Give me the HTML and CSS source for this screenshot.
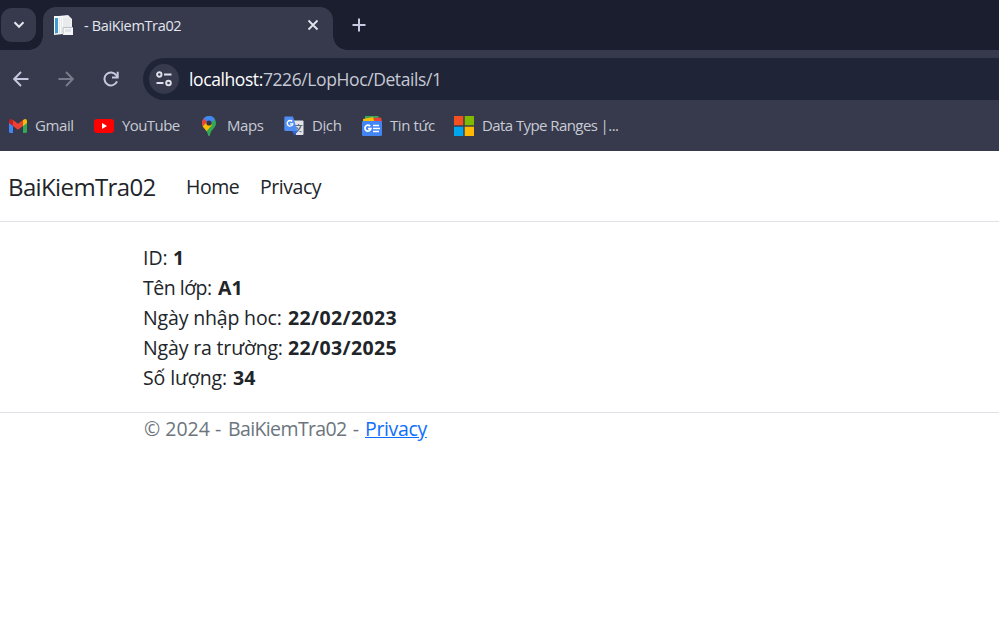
FILE: index.html
```html
<!DOCTYPE html>
<html lang="vi">
<head>
<meta charset="utf-8">
<title>- BaiKiemTra02</title>
<link rel="stylesheet" href="styles.css">
</head>
<body>
<div class="tabstrip">
  <div class="tab-search"><svg width="12" height="8" viewBox="0 0 12 8"><path d="M1.5 1.3 6 5.8 10.5 1.3" fill="none" stroke="#e3e5ef" stroke-width="2"/></svg></div>
  <div class="tab">
    <svg class="favicon" width="21" height="21" viewBox="0 0 21 21"><path d="M1 1.5 15 0l4 4v10H1z" fill="#eef0f1"/><path d="M1 1h9v18L1 20z" fill="#f8f9f9"/><path d="M2 3h3v15l-3 .5z" fill="#3f9bd0"/><path d="M6.500 2.500v16M8.500 2.500v16" stroke="#e3e7e9"/><path d="M10 3h7v9h-7z" fill="#e8eaeb"/><path d="M10 12h10v8H10z" fill="#f4f5f5"/><path d="M12 14h6v3h-6z" fill="#dfe5e8"/><path d="M10 19.500V12.500h10" fill="none" stroke="#b7c0c5"/></svg>
    <span class="tab-title">- BaiKiemTra02</span>
    <svg class="close" width="12" height="12" viewBox="0 0 12 12"><path d="m1.5 1.5 9 9m0-9-9 9" stroke="#e3e5ef" stroke-width="1.8"/></svg>
  </div>
  <svg class="plus" width="14" height="14" viewBox="0 0 14 14"><path d="M7 .5v13M.5 7h13" stroke="#c6c9df" stroke-width="2"/></svg>
</div>
<div class="toolbar">
  <div class="nav-icons">
    <svg width="16" height="16" viewBox="0 0 16 16"><path d="M15.5 8H1.5M8 1 1.2 8 8 15" fill="none" stroke="#c5c8de" stroke-width="1.9"/></svg>
    <svg width="16" height="16" viewBox="0 0 16 16"><path d="M.5 8h14M8 1l6.800 7L8 15" fill="none" stroke="#777b8b" stroke-width="1.9"/></svg>
    <svg width="16" height="16" viewBox="0 0 16 16"><path d="M14 10.400A6.500 6.500 0 1 1 13.300 4.200L14.500 5.800" fill="none" stroke="#c5c8de" stroke-width="2"/><path d="M14.700 .8v5.700H9" fill="none" stroke="#c5c8de" stroke-width="2"/></svg>
  </div>
  <div class="omnibox">
    <div class="site-info"><svg width="16" height="16" viewBox="0 0 16 16" fill="none" stroke="#dfe1ed" stroke-width="1.9"><circle cx="3.300" cy="3.500" r="2.200"/><path d="M8 3.500h7.500M.5 12h7"/><circle cx="12.500" cy="12" r="2.300"/></svg></div>
    <span class="url"><b>localhost:</b>7226/LopHoc/Details/1</span>
  </div>
</div>
<div class="bookmarks">
  <a class="bm gmail"><svg width="18" height="14" viewBox="0 0 18 14"><path d="M0 3v9.500Q0 14 1.500 14H4V6z" fill="#4285f4"/><path d="M18 3v9.500q0 1.500-1.500 1.500H14V6z" fill="#34a853"/><path d="M14 1v6l4-3V2q0-2-2-2z" fill="#fbbc04"/><path d="M4 1v6L0 4V2q0-2 2-2z" fill="#c5221f"/><path d="M4 1 9 4.800 14 1v6l-5 3.800L4 7z" fill="#ea4335"/></svg><span>Gmail</span></a>
  <a class="bm youtube"><svg width="20" height="14" viewBox="0 0 20 14"><rect width="20" height="14" rx="3" fill="#f00"/><path d="m8 4 5 3-5 3z" fill="#fff"/></svg><span>YouTube</span></a>
  <a class="bm maps"><svg width="14" height="20" viewBox="0 0 14 20"><defs><clipPath id="pin"><path d="M7 0a7 7 0 0 1 7 7c0 5-5 6-6.200 12.500Q7 20.500 6.200 19.500C5 13 0 12 0 7a7 7 0 0 1 7-7z"/></clipPath></defs><g clip-path="url(#pin)"><path d="M0 0h14v20H0z" fill="#34a853"/><path d="M0 0h14L7 7 1 13z" fill="#4285f4"/><path d="M0 1 7 7 1 13-2 8z" fill="#ea4335"/><path d="m0 11 7-7 3 5-7 8z" fill="#fbbc04"/><path d="M6 0h8l-1 3-6 6-3-4z" fill="#4285f4"/></g><circle cx="7" cy="7" r="2.600" fill="#303548"/></svg><span>Maps</span></a>
  <a class="bm translate"><svg width="20" height="20" viewBox="0 0 20 20"><path d="M9 4.500h9.500q1 0 1 1v12.500q0 1-1 1H12z" fill="#e2e4e7"/><path d="M11 9.500h7.500M14.500 8v1.500M17 9.500q-1 4-5 6.500M12.500 11q2 4 5 5" fill="none" stroke="#60717c" stroke-width="1.200"/><path d="m8 15 6 0-3.500 4.500z" fill="#3367d6"/><path d="M1.500.5H9L13.500 15h-12q-1.200 0-1.200-1.200v-12Q.3.5 1.500.5z" fill="#4f8df5"/><path d="M8.200 5.500a2.800 2.800 0 1 0 .6 2.300H6" fill="none" stroke="#fff" stroke-width="1.300"/></svg><span>Dịch</span></a>
  <a class="bm news"><svg width="20" height="20" viewBox="0 0 20 20"><path d="M3 0h13.500v5H3z" fill="#34a853"/><path d="m9 2 10-.5 1 4H9z" fill="#ea4335"/><path d="m1 3 10-2 1.500 5H1z" fill="#fbbc04"/><rect y="5" width="20" height="15" rx="1.300" fill="#4285f4"/><path d="M8.200 10.200a3 3 0 1 0 .7 2.500H6" fill="none" stroke="#fff" stroke-width="1.700"/><path d="M11 9.500h6M11 12.500h7M11 15.500h6" stroke="#fff" stroke-width="1.600"/></svg><span>Tin tức</span></a>
  <a class="bm ms"><svg width="20" height="20" viewBox="0 0 20 20"><path d="M0 0h9.300v9.300H0z" fill="#f25022"/><path d="M10.700 0H20v9.300h-9.300z" fill="#7fba00"/><path d="M0 10.700h9.300V20H0z" fill="#00a4ef"/><path d="M10.700 10.700H20V20h-9.300z" fill="#ffb900"/></svg><span>Data Type Ranges |...</span></a>
</div>
<header class="navbar"><a class="brand">BaiKiemTra02</a><a class="home">Home</a><a class="privacy">Privacy</a></header>
<main>
  <div class="row"><span class="l1">ID:</span><b>1</b></div>
  <div class="row"><span class="l2">Tên lớp:</span><b>A1</b></div>
  <div class="row"><span class="l3">Ngày nhập hoc:</span><b class="date">22/02/2023</b></div>
  <div class="row"><span class="l4">Ngày ra trường:</span><b class="date">22/03/2025</b></div>
  <div class="row"><span class="l5">Số lượng:</span><b>34</b></div>
</main>
<footer><span class="year">© 2024 -</span><span class="name">BaiKiemTra02 -</span><a>Privacy</a></footer>
</body>
</html>
```
FILE: styles.css
```css
* { box-sizing: border-box; }
body { margin: 0; height: 632px; overflow: hidden; background: #fff; color: #212529; font: 400 19.5px/30px "Open Sans", "Noto Sans", sans-serif; white-space: nowrap; }
svg { display: block; flex: none; }
.tabstrip { height: 50px; background: #1a1e2f; display: flex; align-items: flex-start; }
.tab-search { width: 35px; height: 34px; margin: 8px 7px 0 1px; border-radius: 11px; background: #363a4c; display: flex; align-items: center; justify-content: center; }
.tab { position: relative; width: 290px; height: 43px; margin-top: 7px; padding: 0 14px 7px 10px; border-radius: 13px 13px 0 0; background: #363a4c; display: flex; align-items: center; }
.tab::before, .tab::after { content: ""; position: absolute; bottom: 0; width: 14px; height: 14px; }
.tab::before { left: -14px; background: radial-gradient(circle at 0 0, transparent 13.5px, #363a4c 14px); }
.tab::after { right: -14px; background: radial-gradient(circle at 100% 0, transparent 13.5px, #363a4c 14px); }
.tab-title { margin-left: 10px; padding-top: 1px; font-size: 14.5px; line-height: 20px; color: #e3e5ef; letter-spacing: -.35px; }
.close { margin-left: auto; }
.plus { margin: 18px 0 0 19px; }
.toolbar { height: 50px; background: #363a4c; padding-top: 8px; display: flex; }
.nav-icons { width: 143px; height: 42px; padding-left: 13px; display: flex; align-items: center; gap: 29px; }
.omnibox { flex: 1; height: 42px; border-radius: 21px 0 0 21px; background: #1f2436; padding-left: 6px; display: flex; align-items: center; }
.site-info { width: 30px; height: 30px; border-radius: 50%; background: #363a4c; display: grid; place-items: center; }
.url { margin-left: 10px; font-size: 17.5px; color: #c6c9d5; letter-spacing: -.4px; }
.url b { font-weight: 400; color: #fff; }
.bookmarks { height: 51px; background: #363a4c; display: flex; align-items: center; font-size: 15px; color: #c8cad4; padding-left: 9px; }
.bm { display: flex; align-items: center; gap: 8px; letter-spacing: -.4px; }
.bm span { padding-bottom: 2px; }
.youtube, .ms { letter-spacing: -.58px; }
.gmail { width: 85px; }
.youtube { width: 108px; }
.maps { width: 82px; gap: 11px; }
.translate { width: 78px; }
.news { width: 92px; }
.navbar { height: 71px; border-bottom: 1px solid #dee2e6; padding: 2px 0 0 8px; display: flex; align-items: center; }
.brand { font-size: 24px; width: 178px; letter-spacing: -.62px; }
.home { width: 74px; }
.home, .privacy { letter-spacing: -.45px; }
main { padding: 21px 0 19px 143px; height: 190px; }
.row { display: flex; }
.row b { font-weight: 700; }
.row .date { letter-spacing: .38px; }
.l1 { width: 30px; }
.l2 { width: 75px; letter-spacing: -.5px; }
.l3, .l4 { width: 145px; letter-spacing: -.16px; }
.l5 { width: 90px; letter-spacing: -.1px; }
footer { border-top: 1px solid #dee2e6; padding: 1px 0 0 144px; color: #6c757d; display: flex; }
.year { width: 84px; }
.name { width: 137px; letter-spacing: -.62px; word-spacing: 1.8px; }
footer a { color: #0d6efd; text-decoration: underline; letter-spacing: -.35px; }
```
